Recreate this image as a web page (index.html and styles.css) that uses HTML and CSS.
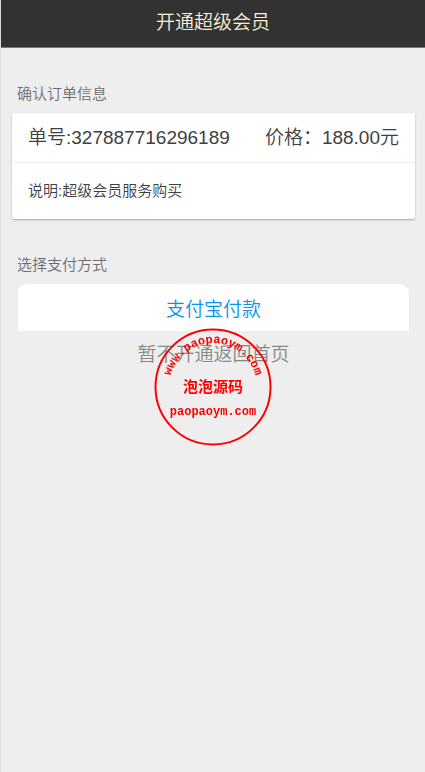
FILE: index.html
```html
<!DOCTYPE html>
<html lang="zh-CN">
<head>
    <meta charset="UTF-8">
    <meta name="viewport" content="width=device-width, initial-scale=1.0">
    <title>开通超级会员</title>
    <link rel="stylesheet" href="styles.css">
</head>
<body>
    <header class="header">
        <h1>开通超级会员</h1>
    </header>

    <main>
        <h2 class="title">确认订单信息</h2>
        <div class="card">
            <div class="card-header">
                <span>单号:327887716296189</span>
                <span>价格：188.00元</span>
            </div>
            <div class="card-content">说明:超级会员服务购买</div>
        </div>

        <h2 class="title">选择支付方式</h2>
        <div class="actions">
            <button type="button" class="pay">支付宝付款</button>
            <a href="#" class="back">暂不开通返回首页</a>
        </div>
    </main>

    <svg class="stamp" viewBox="0 0 118 120" aria-hidden="true">
        <circle cx="59" cy="61" r="57.5" fill="none" stroke="#f00" stroke-width="2"/>
        <path id="arc" d="M 15 61 A 44 44 0 0 1 103 61" fill="none"/>
        <text class="stamp-url" text-anchor="middle"><textPath href="#arc" startOffset="50%">www.paopaoym.com</textPath></text>
        <text class="stamp-name" x="59" y="66" text-anchor="middle">泡泡源码</text>
        <text class="stamp-url" x="59" y="89" text-anchor="middle">paopaoym.com</text>
    </svg>
</body>
</html>
```
FILE: styles.css
```css
* {
    box-sizing: border-box;
}
body {
    margin: 0;
    min-height: 100vh;
    border-left: 1px solid #ddd;
    background-color: #eee;
    color: #3d4145;
    font-family: "Liberation Sans", "Noto Sans CJK SC", sans-serif;
    font-size: 19px;
    font-weight: 350;
}
.header {
    height: 48px;
    background-color: #323232;
    border-bottom: 1px solid #777;
    text-align: center;
}
.header h1 {
    margin: 0;
    font-size: 19px;
    font-weight: 350;
    line-height: 46px;
    color: #faf0d7;
}
.title {
    margin: 36px 16px 9px;
    font-size: 15px;
    font-weight: 350;
    line-height: 20px;
    color: #6d6d72;
}
.card {
    margin: 0 10px 0 11px;
    background-color: #fff;
    border-radius: 2px;
    box-shadow: 0 1px 2px rgba(0, 0, 0, 0.3);
}
.card-header {
    display: flex;
    justify-content: space-between;
    padding: 0 16px;
    border-bottom: 1px solid #f0f0f0;
    line-height: 49px;
}
.card-content {
    padding: 16px;
    font-size: 15px;
    line-height: 24px;
}
.actions {
    margin: 0 16px 0 17px;
    text-align: center;
}
.pay {
    display: block;
    width: 100%;
    height: 47px;
    padding: 0;
    border: none;
    border-radius: 9px 9px 0 0;
    background-color: #fff;
    color: #0894ec;
    font: inherit;
    cursor: pointer;
}
.back {
    display: block;
    line-height: 48px;
    color: #888;
    text-decoration: none;
}
.stamp {
    position: fixed;
    top: 50%;
    left: 50%;
    width: 118px;
    height: 120px;
    transform: translate(-50%, -50%);
    pointer-events: none;
}
.stamp text {
    fill: #f00;
    font-weight: bold;
}
.stamp-url {
    font-family: "Liberation Mono", monospace;
    font-size: 12px;
}
.stamp-name {
    font-family: "Noto Sans CJK SC", sans-serif;
    font-size: 15px;
}
```
